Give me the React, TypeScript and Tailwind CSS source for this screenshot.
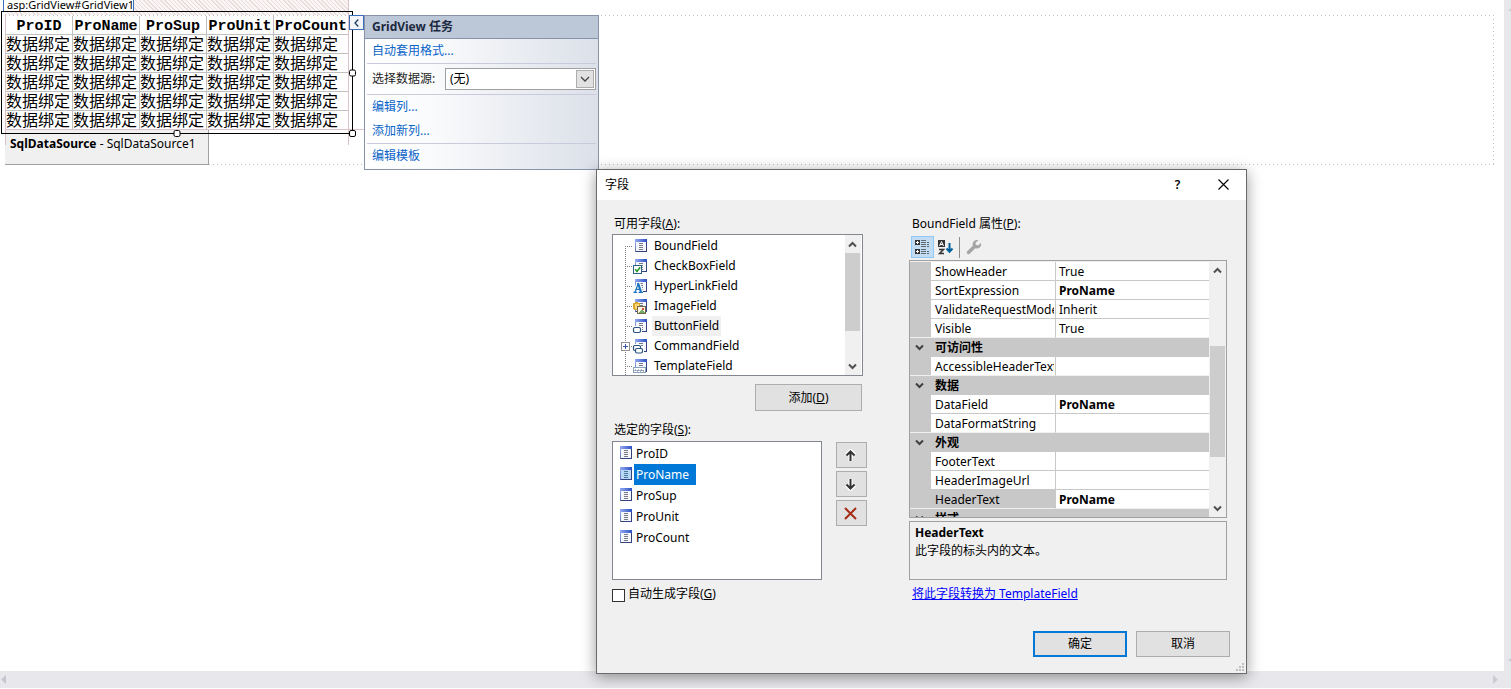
import React from "react";

const columns = ["ProID", "ProName", "ProSup", "ProUnit", "ProCount"];

type IconKind = "plain" | "check" | "link" | "image" | "button" | "command" | "template";

function FieldIcon({ kind = "plain", selected = false }: { kind?: IconKind; selected?: boolean }) {
  const lines = selected ? "#4a779f" : "#777b86";
  return (
    <svg width="17" height="16" viewBox="0 0 17 16" shapeRendering="crispEdges" className="shrink-0" aria-hidden="true">
      <defs>
        <linearGradient id="fieldCap" x1="0" x2="1" y1="0" y2="0">
          <stop offset="0" stopColor="#93a9f2" />
          <stop offset="1" stopColor="#2c50c4" />
        </linearGradient>
        <linearGradient id="fieldEdge" x1="0" x2="0" y1="0" y2="1">
          <stop offset="0" stopColor="#9db2f0" />
          <stop offset="1" stopColor="#5f74ae" />
        </linearGradient>
      </defs>
      <rect x="3" y="1" width="12" height="13" fill="url(#fieldEdge)" />
      <rect x="4" y="4" width="10" height="9" fill={selected ? "#b5d8f5" : "#f4f6fc"} />
      <rect x="3" y="1" width="12" height="3" fill="url(#fieldCap)" />
      <path d="M14 4h1v10H4v-1h10z" fill="#34427f" />
      <path d="M7 5.500h4M7 7.500h4M7 9.500h4M7 11.500h4" stroke={lines} strokeWidth="1" />
      {kind === "check" && (
        <g>
          <rect x="1.500" y="7.500" width="8" height="8" fill="#fff" stroke="#2e6188" />
          <path d="M3.200 11.300l1.800 2.200 3.200-4.300" fill="none" stroke="#2a9a2a" strokeWidth="1.600" shapeRendering="auto" />
        </g>
      )}
      {kind === "link" && (
        <g shapeRendering="auto">
          <path d="M1 15V13L5 4H8L11 13V15z" fill="#fff" />
          <path d="M1.500 14.300h3.500M6.500 14.300h4.500M3 14L6.300 5.500M4.300 11.300h4" fill="none" stroke="#1d75bd" strokeWidth="1.200" />
          <path d="M6 5L9 14" fill="none" stroke="#1d75bd" strokeWidth="2.200" />
        </g>
      )}
      {kind === "image" && (
        <g>
          <path d="M1 5h2v-1h3v1h2v7H2v-1H1z" fill="#d9a52c" />
          <rect x="3" y="6" width="4" height="5" fill="#f7d97a" />
          <rect x="5.500" y="8.500" width="8" height="7" fill="#fbf3e4" stroke="#75664a" />
          <path d="M6 15l4-4 3 4z" fill="#6fae6a" />
          <rect x="10" y="10" width="2" height="2" fill="#d1502e" />
        </g>
      )}
      {kind === "button" && (
        <g shapeRendering="auto">
          <path d="M0 8h10v7H0z" fill="#fff" />
          <rect x="1.500" y="9.500" width="7" height="5" rx="1.500" fill="#fff" stroke="#28527f" strokeWidth="1.200" />
        </g>
      )}
      {kind === "command" && (
        <g shapeRendering="auto">
          <path d="M1 6h8v2h3v8H2z" fill="#fff" />
          <rect x="1.500" y="7.500" width="7" height="5" rx="1.500" fill="#fff" stroke="#28527f" strokeWidth="1.200" />
          <rect x="3.500" y="10.500" width="7" height="4.500" rx="1.500" fill="#fff" stroke="#28527f" strokeWidth="1.200" />
        </g>
      )}
      {kind === "template" && (
        <g>
          <rect x="1.500" y="9.500" width="12" height="5" fill="#fff" stroke="#8aa0bb" />
          <path d="M3 13v-1h1v1M5 13h1v-1h1v1M8 13h1v-1h1v1M11 12v1h1" fill="none" stroke="#6d7f99" shapeRendering="auto" />
        </g>
      )}
    </svg>
  );
}

function Chevron({ dir, color = "#505050" }: { dir: "up" | "down"; color?: string }) {
  return (
    <svg width="9" height="7" viewBox="0 0 9 7" aria-hidden="true" className="shrink-0">
      <path d={dir === "up" ? "M1 5.500L4.500 2L8 5.500" : "M1 1.500L4.500 5L8 1.500"} fill="none" stroke={color} strokeWidth="2" />
    </svg>
  );
}

const fields: { name: string; icon: IconKind; expandable?: boolean; hot?: boolean }[] = [
  { name: "BoundField", icon: "plain" },
  { name: "CheckBoxField", icon: "check" },
  { name: "HyperLinkField", icon: "link" },
  { name: "ImageField", icon: "image" },
  { name: "ButtonField", icon: "button", hot: true },
  { name: "CommandField", icon: "command", expandable: true },
  { name: "TemplateField", icon: "template" },
];

type Row = { category?: string; name?: string; value?: string; bold?: boolean; selected?: boolean };
const rows: Row[] = [
  { name: "ShowHeader", value: "True" },
  { name: "SortExpression", value: "ProName", bold: true },
  { name: "ValidateRequestMode", value: "Inherit" },
  { name: "Visible", value: "True" },
  { category: "可访问性" },
  { name: "AccessibleHeaderText", value: "" },
  { category: "数据" },
  { name: "DataField", value: "ProName", bold: true },
  { name: "DataFormatString", value: "" },
  { category: "外观" },
  { name: "FooterText", value: "" },
  { name: "HeaderImageUrl", value: "" },
  { name: "HeaderText", value: "ProName", bold: true, selected: true },
  { category: "样式" },
];

function GridViewControl() {
  return (
    <div className="relative w-[343px]">
      <table className="w-full table-fixed border-separate border-spacing-0 bg-white font-['Liberation_Mono','Noto_Sans_CJK_SC',monospace] text-[16px]">
        <colgroup>
          <col className="w-[67px]" />
          <col className="w-[67px]" />
          <col className="w-[67px]" />
          <col className="w-[67px]" />
          <col className="w-[75px]" />
        </colgroup>
        <thead>
          <tr className="h-[19px]">
            {columns.map((c) => (
              <th key={c} className="border-r border-b border-[#c0c0c0] p-0 text-center text-[15px] font-bold whitespace-nowrap">
                <span className="block h-[18px] leading-[22px]">{c}</span>
              </th>
            ))}
          </tr>
        </thead>
        <tbody>
          {[0, 1, 2, 3, 4].map((r) => (
            <tr key={r} className="h-[19px]">
              {columns.map((c) => (
                <td key={c} className="border-r border-b border-[#c0c0c0] p-0 whitespace-nowrap">
                  <span className="block h-[18px] leading-[22px]">数据绑定</span>
                </td>
              ))}
            </tr>
          ))}
        </tbody>
      </table>
      <div className="pointer-events-none absolute -top-[2px] -bottom-[15px] -left-px w-px bg-[#dcc3c6]" />
      <div className="pointer-events-none absolute -top-[16px] right-0 -bottom-[15px] w-px bg-[#dcc3c6]" />
      <div className="pointer-events-none absolute -right-[15px] bottom-0 -left-px h-px bg-[#dcc3c6]" />
      <div className="pointer-events-none absolute -top-[5px] -right-[4px] -bottom-[4px] -left-[5px] z-10 border border-black">
        <i className="absolute top-1/2 -right-[4px] size-[7px] -translate-y-1/2 rounded-[2px] border border-black bg-white" />
        <i className="absolute -right-[4px] -bottom-[4px] size-[7px] rounded-[2px] border border-black bg-white" />
        <i className="absolute -bottom-[4px] left-1/2 size-[7px] -translate-x-1/2 rounded-[2px] border border-black bg-white" />
      </div>
    </div>
  );
}

function TasksPanel() {
  const link = "block h-6 px-[5px] leading-6 text-[#0a64c8]";
  const rule = "border-t border-[#c9cbdc]";
  return (
    <section className="absolute top-[15px] left-[364px] z-10 w-[235px] border border-[#8793a8] bg-[linear-gradient(90deg,#ffffff_0%,#fafbfc_28%,#dce0e9_100%)] pb-px text-[#1e1e1e]">
      <h2 className="h-[23px] border-b border-[#8793a8] bg-[#bcc7d8] px-[7px] leading-[22px] font-bold text-[#1b293e]">GridView 任务</h2>
      <div className="mx-[2px]">
        <a href="#format" className={link}>自动套用格式...</a>
        <div className={rule + " flex h-[31px] items-center pl-[5px]"}>
          <label htmlFor="source" className="w-[73px]">选择数据源:</label>
          <div className="relative flex-1">
            <select id="source" className="block h-[22px] w-full appearance-none border border-[#a0a0a0] bg-white px-1 leading-5 text-black">
              <option>(无)</option>
            </select>
            <span className="pointer-events-none absolute top-[2px] right-[2px] flex h-[18px] w-[18px] items-center justify-center border border-[#adadad] bg-[#e1e1e1]">
              <svg width="10" height="6" viewBox="0 0 10 6" aria-hidden="true">
                <path d="M1 1L5 5L9 1" fill="none" stroke="#444" strokeWidth="1.300" />
              </svg>
            </span>
          </div>
        </div>
        <div className={rule}>
          <a href="#columns" className={link}>编辑列...</a>
          <a href="#add" className={link}>添加新列...</a>
        </div>
        <div className={rule}>
          <a href="#templates" className={link}>编辑模板</a>
        </div>
      </div>
    </section>
  );
}

function AvailableFields() {
  return (
    <div className="flex h-[142px] border border-[#828790] bg-white">
      <ul role="tree" aria-label="可用字段" className="flex-1 overflow-hidden pt-px pl-px">
        {fields.map((f, i) => (
          <li key={f.name} role="treeitem" className="relative flex h-5 items-center">
            <span
              className={
                (i === 0 ? "top-[10px] " : "top-0 ") +
                "absolute bottom-0 left-[11px] w-px bg-[repeating-linear-gradient(180deg,#808080_0_1px,transparent_1px_2px)]"
              }
            />
            <span className="ml-[11px] h-px w-[7px] bg-[repeating-linear-gradient(90deg,#808080_0_1px,transparent_1px_2px)]" />
            {f.expandable && (
              <button aria-label="展开" className="absolute left-[7px] flex size-[9px] items-center justify-center border border-[#919191] bg-white">
                <svg width="5" height="5" viewBox="0 0 5 5" aria-hidden="true">
                  <path d="M0 2.500h5M2.500 0v5" stroke="#3a5aa8" />
                </svg>
              </button>
            )}
            <FieldIcon kind={f.icon} />
            <span className={(f.hot ? "bg-[#f0f0f0] " : "") + "ml-[3px] h-5 px-[2px] leading-5"}>{f.name}</span>
          </li>
        ))}
      </ul>
      <div className="mr-px flex w-4 flex-col bg-[#f0f0f0] pr-px">
        <button aria-label="向上滚动" className="flex h-[18px] items-center justify-center"><Chevron dir="up" /></button>
        <div className="h-[78px] bg-[#cdcdcd]" />
        <button aria-label="向下滚动" className="mt-auto flex h-[18px] items-center justify-center"><Chevron dir="down" /></button>
      </div>
    </div>
  );
}

function SelectedFields() {
  const side = "flex h-[26px] w-[31px] items-center justify-center border border-[#adadad] bg-[#e1e1e1] pr-[2px]";
  return (
    <div className="flex justify-between">
      <ul role="listbox" aria-label="选定的字段" className="h-[139px] w-[210px] border border-[#828790] bg-white pt-px pl-1">
        {columns.map((c) => {
          const on = c === "ProName";
          return (
            <li key={c} role="option" aria-selected={on} className="flex h-[21px] items-start">
              <span className="pt-[2px]"><FieldIcon selected={on} /></span>
              <span className={(on ? "bg-[#0078d7] pr-[7px] text-white " : "") + "h-[21px] pl-[2px] leading-[21px]"}>{c}</span>
            </li>
          );
        })}
      </ul>
      <div className="mt-px flex flex-col gap-[3px]">
        <button aria-label="上移" className={side}>
          <svg width="13" height="13" viewBox="0 0 13 13" aria-hidden="true">
            <path d="M6.500 12V2M2.500 6L6.500 2L10.500 6" fill="none" stroke="#fff" strokeWidth="4" />
            <path d="M6.500 12V2M2.500 6.500L6.500 2.500L10.500 6.500" fill="none" stroke="#333" strokeWidth="2" />
          </svg>
        </button>
        <button aria-label="下移" className={side}>
          <svg width="13" height="13" viewBox="0 0 13 13" aria-hidden="true">
            <path d="M6.500 1V11M2.500 7L6.500 11L10.500 7" fill="none" stroke="#fff" strokeWidth="4" />
            <path d="M6.500 1V11M2.500 6.500L6.500 10.500L10.500 6.500" fill="none" stroke="#333" strokeWidth="2" />
          </svg>
        </button>
        <button aria-label="删除" className={side}>
          <svg width="13" height="13" viewBox="0 0 13 13" aria-hidden="true">
            <path d="M1 1L12 12M12 1L1 12" stroke="#a62b17" strokeWidth="2" />
          </svg>
        </button>
      </div>
    </div>
  );
}

function PropertyToolbar() {
  return (
    <div className="mb-[2px] flex h-[22px] items-center">
      <button aria-label="按分类顺序" className="ml-[2px] flex h-[22px] w-[23px] items-center justify-center border border-[#90c8f6] bg-[#c2dcf3]">
        <svg width="15" height="15" viewBox="0 0 15 15" shapeRendering="crispEdges" aria-hidden="true">
          <path d="M0 0h5v5H0zM0 9h5v5H0z" fill="#333" />
          <path d="M1 2.500h3M2.500 1v3M1 11.500h3M2.500 10v3" stroke="#fff" />
          <path d="M6 .5h5M6 2.500h5M6 4.500h5M6 6.500h5M6 9.500h5M6 11.500h5M6 13.500h5M12 2.500h2M12 4.500h2M12 6.500h2M12 11.500h2M12 13.500h2" stroke="#5d6770" />
        </svg>
      </button>
      <button aria-label="按字母顺序" className="flex h-[22px] w-[23px] items-center justify-center">
        <svg width="15" height="15" viewBox="0 0 15 15" aria-hidden="true">
          <rect width="7" height="7" fill="#333" />
          <path d="M1.500 6L3.500 1.500L5.500 6M2 4.500h3" fill="none" stroke="#fff" />
          <path d="M1 9.500h4.500L1.500 13.500H6" fill="none" stroke="#333" strokeWidth="1.500" />
          <path d="M11.500 3v9M8.500 8.500L11.500 11.700L14.500 8.500" fill="none" stroke="#00609c" strokeWidth="2" />
        </svg>
      </button>
      <span className="mx-[2px] h-[21px] w-px bg-[#8d8d8d]" />
      <button aria-label="属性页" disabled className="flex h-[22px] w-[23px] items-center justify-center">
        <svg width="16" height="16" viewBox="0 0 16 16" aria-hidden="true">
          <path d="M2.500 13.500L8.500 7.500" stroke="#a5a5a5" strokeWidth="3.500" strokeLinecap="round" />
          <path d="M12.500 1.300A4.300 4.300 0 1 0 15 4L12 6.500L9.800 5.800L9.500 3.800Z" fill="#a5a5a5" />
        </svg>
      </button>
    </div>
  );
}

function PropertyGrid() {
  return (
    <div className="flex h-[258px] overflow-hidden border border-[#a0a0a0] pt-px">
      <div className="min-w-0 flex-1 overflow-hidden">
        <table className="w-full table-fixed border-separate border-spacing-0 text-left">
          <colgroup>
            <col className="w-[21px]" />
            <col className="w-[125px]" />
            <col />
          </colgroup>
          <tbody>
            {rows.map((r, i) => {
              if (r.category) {
                return (
                  <tr key={i} className="h-[19px] bg-[#c8c8c8]">
                    <td className="p-0 pl-[5px]"><Chevron dir="down" color="#404040" /></td>
                    <th colSpan={2} className="p-0 pl-1 leading-[19px] font-bold">{r.category}</th>
                  </tr>
                );
              }
              const beforeCategory = Boolean(rows[i + 1]?.category);
              const line = beforeCategory ? "border-b border-b-[#f0f0f0] " : "border-b border-b-[#c8c8c8] ";
              return (
                <tr key={i} className="h-[19px]">
                  <td className={line + "bg-[#c8c8c8] p-0"} />
                  <th className={line + (r.selected ? "bg-[#c8c8c8] " : "bg-white ") + "border-r border-r-[#c8c8c8] p-0 pr-px pl-1 font-normal whitespace-nowrap"}>
                    <span className="block h-[18px] overflow-hidden leading-5">{r.name}</span>
                  </th>
                  <td className={line + (r.bold ? "font-bold " : "") + "bg-white p-0 pl-[3px]"}>
                    <span className="block h-[18px] leading-5">{r.value}</span>
                  </td>
                </tr>
              );
            })}
          </tbody>
        </table>
      </div>
      <div className="ml-px flex w-4 flex-col pr-px">
        <button aria-label="向上滚动" className="flex h-[17px] items-center justify-center"><Chevron dir="up" /></button>
        <div className="mt-[67px] h-[111px] bg-[#cdcdcd]" />
        <button aria-label="向下滚动" className="mt-auto flex h-[17px] items-center justify-center"><Chevron dir="down" /></button>
      </div>
    </div>
  );
}

function FieldsDialog() {
  const label = "block h-[18px] pl-[2px] leading-5";
  return (
    <section role="dialog" aria-label="字段" className="absolute top-[169px] left-[596px] z-20 w-[651px] border border-[#6a6a6a] bg-[#f0f0f0] text-black shadow-[0_3px_14px_rgba(0,0,0,0.4)]">
      <header className="flex h-[30px] items-center bg-white pl-2">
        <h1 className="flex-1">字段</h1>
        <button aria-label="帮助" className="w-[45px] text-center font-semibold">?</button>
        <button aria-label="关闭" className="flex w-[46px] items-center justify-center pb-px">
          <svg width="11" height="11" viewBox="0 0 11 11" aria-hidden="true">
            <path d="M.5 .5L10.500 10.500M10.500 .5L.5 10.500" stroke="#000" strokeWidth="1.100" />
          </svg>
        </button>
      </header>
      <div className="flex justify-between pt-[14px] pr-[19px] pl-[15px]">
        <div className="w-[255px]">
          <span className={label + " mb-[2px]"}>可用字段(<u>A</u>):</span>
          <div className="w-[251px]">
            <AvailableFields />
            <button className="mt-2 mr-px ml-auto block h-[27px] w-[107px] border border-[#adadad] bg-[#e1e1e1]">添加(<u>D</u>)</button>
          </div>
          <span className={label + " mt-[9px] mb-[3px]"}>选定的字段(<u>S</u>):</span>
          <SelectedFields />
          <label className="mt-[5px] flex h-[18px] items-center gap-[3px]">
            <input type="checkbox" className="mt-[3px] size-[13px] appearance-none border border-[#333] bg-white" />
            <span>自动生成字段(<u>G</u>)</span>
          </label>
        </div>
        <div className="w-[318px]">
          <span className={label + " mb-1 ml-px"}>BoundField 属性(<u>P</u>):</span>
          <PropertyToolbar />
          <PropertyGrid />
          <div className="mt-[3px] h-[59px] border border-[#a0a0a0] px-[5px] pt-[2px] leading-[18px]">
            <h2 className="font-bold">HeaderText</h2>
            <p>此字段的标头内的文本。</p>
          </div>
          <a href="#convert" className="mt-[5px] ml-[3px] inline-block leading-[18px] text-[#0000ff] underline">将此字段转换为 TemplateField</a>
        </div>
      </div>
      <footer className="mt-7 flex justify-end gap-[9px] pr-4 pb-4">
        <button className="h-[26px] w-[94px] border-2 border-[#0078d7] bg-[#e1e1e1]">确定</button>
        <button className="h-[26px] w-[94px] border border-[#adadad] bg-[#e1e1e1]">取消</button>
      </footer>
      <svg width="8" height="8" viewBox="0 0 8 8" className="absolute right-[2px] bottom-[2px]" aria-hidden="true">
        <path d="M6 0h2v2H6zM3 3h2v2H3zM6 3h2v2H6zM0 6h2v2H0zM3 6h2v2H3zM6 6h2v2H6z" fill="#bfbfbf" />
      </svg>
    </section>
  );
}

export default function App() {
  return (
    <div className="flex h-screen flex-col overflow-hidden bg-white pb-px font-['Noto_Sans','Noto_Sans_CJK_SC',sans-serif] text-[12px] leading-[18px] text-black">
      <div className="flex min-h-0 flex-1">
        <main className="relative min-w-0 flex-1">
          <div className="ml-[5px] h-[15px] w-[344px] bg-[repeating-linear-gradient(45deg,#e8dcdd_0_1px,#faf6f6_1px_3px)]">
            <span className="-ml-[2px] flex h-[12px] w-[131px] items-end border border-t-0 border-[#3a6ebd] bg-white pl-[3px] text-[11px] leading-[13px]">
              asp:GridView#GridView1
            </span>
          </div>
          <div className="mr-[10px] ml-[5px]">
            <div className="h-px bg-[repeating-linear-gradient(90deg,#c0c0c0_0_1px,transparent_1px_4px)]" />
            <div className="flex">
              <div className="flex-1">
                <div className="pl-px">
                  <GridViewControl />
                </div>
                <div className="h-[35px] w-[204px] border-r border-b border-[#a0a0a0] bg-[#f0f0f0] pt-[5px] pl-[5px] whitespace-nowrap">
                  <b>SqlDataSource</b> - SqlDataSource1
                </div>
              </div>
              <div className="w-px bg-[repeating-linear-gradient(180deg,transparent_0_3px,#c0c0c0_3px_4px)]" />
            </div>
            <div className="-mt-px ml-[204px] h-px bg-[repeating-linear-gradient(90deg,#c0c0c0_0_1px,transparent_1px_4px)]" />
          </div>
          <button aria-label="收起任务" className="absolute top-[15px] left-[349px] z-20 flex size-[15px] items-center justify-center border border-[#3a6ebd] bg-[#f3f5f9]">
            <svg width="5" height="8" viewBox="0 0 5 8" aria-hidden="true">
              <path d="M4.300 .5L1 4L4.300 7.500" fill="none" stroke="#1b3a66" strokeWidth="1.300" />
            </svg>
          </button>
          <TasksPanel />
          <FieldsDialog />
        </main>
        <div className="flex w-[7px] flex-col justify-between overflow-hidden bg-[#e8e8ec] pt-2 pb-2">
          <svg width="7" height="4" viewBox="0 0 7 4" aria-hidden="true"><path d="M7 0L4 3h3z" fill="#cbcbd3" /></svg>
          <svg width="7" height="4" viewBox="0 0 7 4" aria-hidden="true"><path d="M4 0h3v3z" fill="#c6c6d0" /></svg>
        </div>
      </div>
      <div className="flex h-[17px] items-center justify-between bg-[#e8e8ec] pr-[13px] pl-px">
        <svg width="5" height="9" viewBox="0 0 5 9" aria-hidden="true"><path d="M5 0v9L0 4.500z" fill="#c6c6d0" /></svg>
        <svg width="5" height="9" viewBox="0 0 5 9" aria-hidden="true"><path d="M0 0v9l5-4.500z" fill="#cbcbd3" /></svg>
      </div>
    </div>
  );
}
